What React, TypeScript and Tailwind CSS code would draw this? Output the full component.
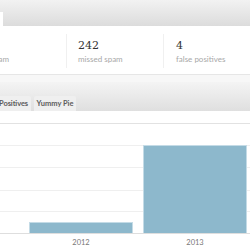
const sans = { fontFamily: 'Lato, "Liberation Sans", sans-serif' };

function Stat({ value, label, className }: { value: string; label: string; className: string }) {
  return (
    <div className={className}>
      <p className="h-[11px] text-[11px] leading-[11px] text-[#333]" style={{ fontFamily: '"DejaVu Serif", serif' }}>
        {value}
      </p>
      <p className="mt-[4px] whitespace-nowrap text-[8px] leading-[8px] text-[#a8a8a8]" style={sans}>
        {label}
      </p>
    </div>
  );
}

export default function App() {
  return (
    <div className="h-[250px] w-[250px] overflow-hidden bg-white">
      {/* summary panel */}
      <div className="flex h-[26px] items-end bg-gradient-to-b from-[#f2f2f2] to-[#dcdcdc]">
        <div className="h-[14px] w-[3px] bg-white" />
      </div>
      <div className="flex h-[49px] items-start border-b border-[#e6e6e6] bg-white">
        <Stat value="" label="ham" className="-ml-[6px] mt-[14px] w-[72px] shrink-0" />
        <div className="mt-[8px] h-[34px] w-px shrink-0 bg-[#f0f0f0]" />
        <Stat value="242" label="missed spam" className="mt-[14px] w-[96px] shrink-0 pl-[11px]" />
        <div className="mt-[8px] h-[34px] w-px shrink-0 bg-[#f0f0f0]" />
        <Stat value="4" label="false positives" className="mt-[14px] pl-[12px]" />
      </div>
      <div className="h-[7px] bg-[#f7f7f7]" />

      {/* chart panel */}
      <div className="flex h-[29px] items-end gap-[3px] bg-gradient-to-b from-[#f4f4f4] to-[#dfdfdf]">
        <div
          className="flex h-[15px] w-[31px] shrink-0 items-center justify-end whitespace-nowrap rounded-tr-[2px] bg-[#efefef] pr-[3px] text-[7.5px] font-bold tracking-[-0.1px] text-[#5c5c5c]"
          style={sans}
        >
          False Positives
        </div>
        <div
          className="flex h-[15px] w-[42px] shrink-0 items-center justify-center whitespace-nowrap rounded-t-[2px] bg-[#efefef] text-[7.5px] font-bold text-[#5c5c5c]"
          style={sans}
        >
          Yummy Pie
        </div>
      </div>
      <div className="h-[13px] border-b border-[#e2e2e2] bg-white" />
      <svg width="250" height="124" viewBox="0 0 250 124" className="block">
        {[21, 43, 66, 87].map((y) => (
          <line key={y} x1="0" x2="250" y1={y + 0.5} y2={y + 0.5} stroke="#efefef" />
        ))}
        <rect x="29.5" y="98.5" width="103" height="11" fill="#8db8cc" stroke="#c4dbe6" />
        <rect x="143.5" y="21.5" width="103" height="88" fill="#8db8cc" stroke="#c4dbe6" />
        <line x1="0" x2="250" y1="109.5" y2="109.5" stroke="#dedede" />
        <text x="81" y="121" textAnchor="middle" fontSize="7.5" fill="#777" style={sans}>
          2012
        </text>
        <text x="195" y="121" textAnchor="middle" fontSize="7.5" fill="#777" style={sans}>
          2013
        </text>
      </svg>
    </div>
  );
}
